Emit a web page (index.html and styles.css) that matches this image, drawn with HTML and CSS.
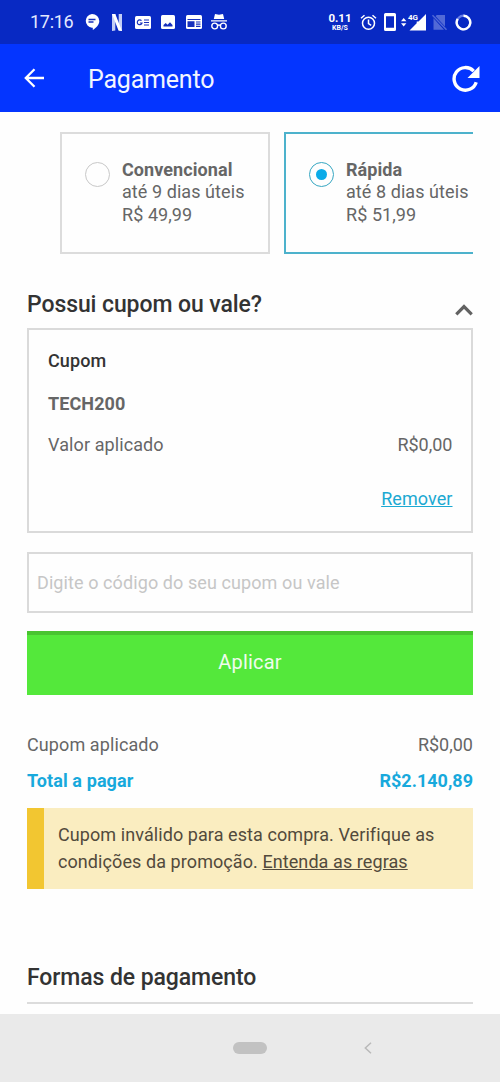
FILE: index.html
```html
<!DOCTYPE html>
<html lang="pt-BR">
<head>
<meta charset="utf-8">
<title>Pagamento</title>
<link rel="stylesheet" href="styles.css">
</head>
<body>
<div class="status">
  <span class="clock">17:16</span>
  <svg class="chat" width="16" height="18" viewBox="0 0 16 18"><path fill="#fff" d="M8 1a7.200 7 0 0 1 7.300 7c0 4-3.300 7-6.500 9v-2.300H8A7.100 6.900 0 0 1 8 1z"/><path stroke="#1730bd" stroke-width="1.300" d="M4.500 6.500h7M4.500 9h5"/></svg>
  <svg class="netflix" width="10" height="17" viewBox="0 0 10 17"><path fill="#c3cdf6" d="M0 0h3.300v16.500L0 17zM6.700 0H10v17l-3.300-.5z"/><path fill="#fff" d="M0 0h3.300L10 17l-3.500-.5z"/></svg>
  <svg class="news" width="16" height="13" viewBox="0 0 16 13"><rect width="16" height="13" rx="1.500" fill="#fff"/><path fill="none" stroke="#1730bd" stroke-width="1.200" d="M6.500 4.700A2.400 2.400 0 1 0 7 7H4.800M9 4h5M9 6.500h5M9 9h5"/></svg>
  <svg class="photo" width="14" height="14" viewBox="0 0 14 14"><rect width="14" height="14" rx="1.500" fill="#fff"/><path fill="#1730bd" d="M2.500 11.500v-1.500L4.700 8l1.800 1.700L9 7.300l2.500 2.700v1.500z"/></svg>
  <svg class="window" width="16" height="14" viewBox="0 0 16 14"><rect width="16" height="14" rx="1.500" fill="#fff"/><path fill="#1730bd" d="M1.500 4h13v1h-13zM1.500 6.200h7v5.800h-7zM10 6.400h4.500v1.200H10zM10 8.600h4.500v1.200H10zM10 10.800h4.500V12H10z"/></svg>
  <svg class="incognito" width="18" height="16" viewBox="0 0 18 16"><path fill="#fff" d="M3.800 5 5 0l4 .8L13 0l1.200 5zM1 6.300h16v1.300H1z"/><g fill="none" stroke="#fff" stroke-width="1.400"><circle cx="4.700" cy="12" r="2.900"/><circle cx="13.300" cy="12" r="2.900"/><path d="M7.500 11.500q1.500-1 3 0"/></g></svg>
  <span class="speed"><b>0.11</b><small>KB/S</small></span>
  <svg class="alarm" width="17" height="17" viewBox="0 0 17 17"><g fill="none" stroke="#fff" stroke-width="1.500"><circle cx="8.500" cy="9.300" r="6"/><path d="M8.500 5.600v4l2.700 1.700M1 4.300l3.500-3M16 4.300l-3.500-3"/></g></svg>
  <svg class="phone" width="12" height="18" viewBox="0 0 12 18"><path fill="#fff" fill-rule="evenodd" d="M1.500 0h9Q12 0 12 1.500v15q0 1.500-1.500 1.500h-9Q0 18 0 16.500v-15Q0 0 1.500 0zM2 3.200v11.500h8V3.200z"/></svg>
  <svg class="signal" width="25" height="18" viewBox="0 0 25 18"><path fill="#fff" d="M0 8.200 2.700 5l2.700 3.200zM0 10.200l2.700 3.200 2.700-3.200zM25 1v16.500H8.500l7.200-7.200V8.500h1.800z"/><text class="network" x="7" y="7.200">4G</text></svg>
  <svg class="nosim" width="15" height="17" viewBox="0 0 15 17"><path fill="#5269d6" d="M4.700 1H13v11.500L3.600 2.200zM1.500 4.200 12 15.700H1.500z"/><path stroke="#5269d6" stroke-width="1.400" d="m.5 1.200 14 14.500"/></svg>
  <svg class="ring" width="17" height="17" viewBox="0 0 17 17"><circle cx="8.500" cy="8.500" r="6.800" fill="none" stroke="#667ce6" stroke-width="2.300"/><path fill="none" stroke="#fff" stroke-width="2.400" d="M8.500 1.700a6.800 6.800 0 1 1-5.800 3.200"/></svg>
</div>
<header class="appbar">
  <svg class="back" width="21" height="20" viewBox="0 0 21 20"><path fill="none" stroke="#fff" stroke-width="2.300" d="M20 10H2M10.500 1.300 1.800 10l8.700 8.700"/></svg>
  <h1 class="title">Pagamento</h1>
  <svg class="refresh" width="28" height="27" viewBox="0 0 28 27"><path fill="none" stroke="#fff" stroke-width="3.400" d="M24.200 17.200A11.300 11.300 0 1 1 21.700 6.200"/><path fill="#fff" d="M27.500 1v12H15.500z"/></svg>
</header>
<main class="content">
  <div class="shipping">
    <label class="option">
      <span class="radio"></span>
      <span class="details"><b>Convencional</b><span>até 9 dias úteis</span><span>R$ 49,99</span></span>
    </label>
    <label class="option selected">
      <span class="radio"></span>
      <span class="details"><b>Rápida</b><span>até 8 dias úteis</span><span>R$ 51,99</span></span>
    </label>
  </div>
  <div class="heading">
    <h2 class="section-title">Possui cupom ou vale?</h2>
    <svg class="chevron" width="18" height="12" viewBox="0 0 18 12"><path fill="none" stroke="#626262" stroke-width="3.200" d="m1.300 10.300 7.700-7.700 7.700 7.700"/></svg>
  </div>
  <section class="coupon">
    <h3 class="coupon-title">Cupom</h3>
    <b class="code">TECH200</b>
    <div class="row applied"><span class="row-label">Valor aplicado</span><span>R$0,00</span></div>
    <a class="remove">Remover</a>
  </section>
  <div class="field">Digite o código do seu cupom ou vale</div>
  <div class="apply">Aplicar</div>
  <div class="row discount"><span class="row-label">Cupom aplicado</span><span>R$0,00</span></div>
  <div class="row total"><b class="row-label">Total a pagar</b><b>R$2.140,89</b></div>
  <div class="alert"><div>Cupom inválido para esta compra. Verifique as</div><div>condições da promoção. <u>Entenda as regras</u></div></div>
  <h2 class="section-title payment">Formas de pagamento</h2>
</main>
<nav class="navbar">
  <span class="home"></span>
  <svg class="nav-back" width="8" height="12" viewBox="0 0 8 12"><path fill="none" stroke="#b9b9b9" stroke-width="1.500" d="M7 .7 1.300 6 7 11.300"/></svg>
</nav>
</body>
</html>
```
FILE: styles.css
```css
* { box-sizing: border-box; }
body {
  margin: 0;
  width: 500px;
  height: 1082px;
  overflow: hidden;
  display: flex;
  flex-direction: column;
  background: #fefefe;
  color: #666;
  font: 18px/22px Roboto, "Liberation Sans", sans-serif;
}
h1, h2, h3 { margin: 0; font-weight: 500; }
svg { display: block; flex: none; }

.status {
  flex: none;
  height: 44px;
  padding-left: 30px;
  display: flex;
  align-items: center;
  background: #0829c3;
  color: #fff;
}
.clock { width: 54px; font-size: 18px; letter-spacing: -0.3px; color: #e3e8ff; }
.netflix { margin-left: 12px; }
.news { margin-left: 13px; }
.photo { margin-left: 10px; }
.window { margin-left: 11px; }
.incognito { margin-left: 8px; }
.speed {
  width: 24px;
  margin-left: 100px;
  display: flex;
  flex-direction: column;
  align-items: center;
  line-height: 12px;
}
.speed b { font-size: 11.500px; }
.speed small { font-size: 7px; font-weight: 700; line-height: 8px; }
.alarm { margin-left: 8px; }
.phone { margin-left: 7px; }
.signal { margin-left: 5px; }
.network { font-size: 8px; font-weight: 700; fill: #fff; }
.nosim { margin-left: 6px; }
.ring { margin-left: 8px; }

.appbar {
  flex: none;
  height: 68px;
  padding: 0 20px 0 24px;
  display: flex;
  align-items: center;
  background: #0435ff;
  color: #f2f5ff;
}
.title { margin-left: 43px; padding-top: 4px; font-size: 25px; font-weight: 400; line-height: 30px; letter-spacing: -0.2px; }
.refresh { margin-left: auto; }

.content { flex: 1; padding: 20px 27px 0; min-height: 0; }
.shipping { margin-left: 33px; height: 122px; display: flex; gap: 14px; overflow: hidden; }
.option {
  flex: none;
  width: 210px;
  padding: 26px 0 0 23px;
  display: flex;
  border: 2px solid #dcdcdc;
}
.selected { border-color: #4db2cc; }
.radio {
  flex: none;
  width: 25px;
  height: 25px;
  margin: 2px 12px 0 0;
  display: grid;
  place-items: center;
  border: 1.500px solid #c8c8c8;
  border-radius: 50%;
}
.selected .radio { border-color: #37a7c2; }
.selected .radio::after { content: ""; width: 11px; height: 11px; border-radius: 50%; background: #0cabe8; }
.details { display: flex; flex-direction: column; line-height: 22.500px; white-space: nowrap; margin-top: -1.500px; letter-spacing: 0.07px; }

.heading { margin-top: 34px; height: 40px; display: flex; justify-content: space-between; }
.section-title { padding-top: 1px; font-size: 23px; line-height: 32px; letter-spacing: -0.09px; color: #333; }
.chevron { margin-top: 15.500px; }

.coupon {
  height: 205px;
  padding: 20px 18.500px 0 19px;
  display: flex;
  flex-direction: column;
  border: 2px solid #dadada;
}
.coupon-title { font-size: 18px; letter-spacing: 0.1px; color: #333; }
.code { margin-top: 21px; letter-spacing: 0.1px; }
.row { display: flex; justify-content: space-between; }
.row-label { letter-spacing: 0.1px; }
.applied { margin-top: 19px; }
.remove { margin-top: 32px; align-self: flex-end; color: #1ca9d2; text-decoration: underline; letter-spacing: 0.08px; }
.field {
  height: 61px;
  margin-top: 19px;
  padding-left: 8px;
  border: 2px solid #dadada;
  line-height: 57px;
  letter-spacing: 0.09px;
  color: #c6c6c6;
}
.apply {
  height: 64px;
  margin-top: 18px;
  border-top: 4px solid #49c431;
  background: #54e83b;
  color: #effcec;
  font-size: 20px;
  line-height: 55px;
  letter-spacing: 0.2px;
  text-align: center;
}
.discount { margin-top: 39px; }
.total { margin-top: 14px; color: #18a9dc; }
.alert {
  height: 81px;
  margin-top: 16px;
  padding: 13px 0 0 14px;
  border-left: 17px solid #f2c631;
  background: #faedc0;
  color: #524a3c;
  line-height: 27px;
  letter-spacing: 0.08px;
  white-space: nowrap;
}
.payment { margin-top: 71px; padding-top: 2px; height: 44px; border-bottom: 2px solid #dcdcdc; }

.navbar {
  flex: none;
  height: 68px;
  padding-left: 233px;
  display: flex;
  align-items: center;
  background: #eaeaea;
}
.home { width: 34px; height: 12px; border-radius: 6px; background: #c2c2c2; }
.nav-back { margin-left: 97px; }
```
